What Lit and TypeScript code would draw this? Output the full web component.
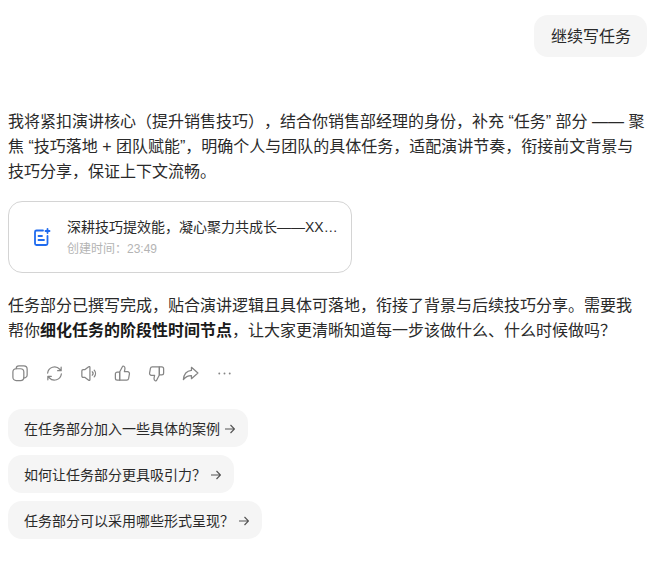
import { LitElement, html, css, svg } from "lit";
import { customElement } from "lit/decorators.js";

const actionIcons = [
  svg`<rect x="2" y="5" width="11.500" height="12.500" rx="3.500"/><path d="M5.500 5V4.800A2.800 2.800 0 0 1 8.300 2h5.200A3.500 3.500 0 0 1 17 5.500v6a3 3 0 0 1-3.500 3"/>`,
  svg`<path d="M2.800 9.500A7.300 7.300 0 0 1 15.500 5.500L16.800 7M17 3.300V7h-3.700M17.200 10.500A7.300 7.300 0 0 1 4.500 14.500L3.200 13M3 16.700V13h3.700"/>`,
  svg`<path d="M3 7.500C3 6.500 3.500 6 4.500 6H6l4.200-3.200c.6-.4 1.300 0 1.300.7v13c0 .7-.7 1.100-1.300.7L6 14H4.500C3.500 14 3 13.500 3 12.500z"/><path d="M14 8.200a2.600 2.600 0 0 1 0 3.600M16 6.500a5.200 5.200 0 0 1 0 7"/>`,
  svg`<path d="M7 8.500 10 2.600c.3-.7 2.600-.5 2.600 1.800 0 1.300-.4 2.500-.6 3.600h3.300a2 2 0 0 1 2 2.400l-.9 5a2 2 0 0 1-2 1.600H7z"/><path d="M7 8.500H4.500a2 2 0 0 0-2 2V15a2 2 0 0 0 2 2H7z"/>`,
  svg`<path d="M13 11.500 10 17.400c-.3.7-2.600.5-2.600-1.800 0-1.300.4-2.500.6-3.600H4.700a2 2 0 0 1-2-2.400l.9-5a2 2 0 0 1 2-1.600H13z"/><path d="M13 11.500h2.500a2 2 0 0 0 2-2V5a2 2 0 0 0-2-2H13z"/>`,
  svg`<path d="M11 3.500v3.300C6 7.300 3 11 2.500 16.500c2.200-3 5-4.400 8.500-4.300v3.300l6.800-6z"/>`,
];

@customElement("app-root")
export class AppRoot extends LitElement {
  static styles = css`
    :host {
      display: block;
      width: 660px;
      height: 580px;
      background: #fff;
      box-sizing: border-box;
      padding: 15px 13px 0 8px;
      font-family: "Liberation Sans", "Noto Sans CJK SC", sans-serif;
      font-size: 16px;
      line-height: 25px;
      color: #2a2a2a;
      overflow: hidden;
      text-spacing-trim: space-all;
    }
    .user-row { display: flex; justify-content: flex-end; }
    .bubble {
      background: #f5f5f5;
      border-radius: 14px;
      padding: 9px 16px 8px 17px;
    }
    p { margin: 0; }
    .intro { margin-top: 52px; }
    .card {
      margin-top: 17px;
      width: 344px;
      height: 72px;
      box-sizing: border-box;
      border: 1px solid #d4d4d4;
      border-radius: 14px;
      display: flex;
      align-items: center;
      padding: 1px 0 0 24px;
      gap: 16px;
    }
    .doc { width: 18px; height: 18px; flex: none; margin-top: -1px; }
    .card-text { width: 271px; }
    .title { font-size: 14px; line-height: 22px; white-space: nowrap; overflow: hidden; text-overflow: ellipsis; }
    .time { font-size: 12px; line-height: 20px; padding-top: 1px; color: #b4b4b4; }
    .answer { margin-top: 20px; }
    strong { font-weight: 700; color: #1a1a1a; }
    .actions { margin-top: 21px; display: flex; gap: 15px; padding-left: 3px; }
    .actions svg { width: 19px; height: 19px; fill: none; stroke: #858585; stroke-width: 1.300; stroke-linejoin: round; stroke-linecap: round; }
    .actions .dots circle { fill: #858585; stroke: none; }
    .chips { margin-top: 26px; display: flex; flex-direction: column; align-items: flex-start; gap: 8px; }
    .chip {
      height: 38px;
      box-sizing: border-box;
      display: flex;
      align-items: center;
      background: #f5f5f5;
      border-radius: 14px;
      padding: 1px 13px 0 16px;
      font-size: 14px;
      line-height: 20px;
    }
    .chip svg { width: 10px; height: 10px; fill: none; stroke: #555; stroke-width: 1.200; margin-left: 5px; }
  `;

  private chip(text: string) {
    return html`<div class="chip">${text}<svg viewBox="0 0 10 10"><path d="M0 5h9.500M5.500 1l4 4-4 4"/></svg></div>`;
  }

  render() {
    return html`
      <div class="user-row"><div class="bubble">继续写任务</div></div>
      <p class="intro">我将紧扣演讲核心（提升销售技巧），结合你销售部经理的身份，补充 “任务” 部分 —— 聚焦 “技巧落地 + 团队赋能”，明确个人与团队的具体任务，适配演讲节奏，衔接前文背景与技巧分享，保证上下文流畅。</p>
      <div class="card">
        <svg class="doc" viewBox="0 0 18 18" fill="none" stroke="#1f6bef" stroke-width="1.800" stroke-linejoin="round" stroke-linecap="round">
          <path d="M10 2.500H3.500A1.500 1.500 0 0 0 2 4v11.500A1.500 1.500 0 0 0 3.500 17h9.500a1.500 1.500 0 0 0 1.500-1.500V8"/>
          <path d="M5.500 8h3.500M5.500 12h5.500"/>
          <path d="M14.500 1v4M12.500 3h4"/>
        </svg>
        <div class="card-text">
          <div class="title">深耕技巧提效能，凝心聚力共成长——XXX部门任务规划</div>
          <div class="time">创建时间：23:49</div>
        </div>
      </div>
      <p class="answer">任务部分已撰写完成，贴合演讲逻辑且具体可落地，衔接了背景与后续技巧分享。需要我帮你<strong>细化任务的阶段性时间节点</strong>，让大家更清晰知道每一步该做什么、什么时候做吗？</p>
      <div class="actions">
        ${actionIcons.map((i) => html`<svg viewBox="0 0 20 20">${i}</svg>`)}
        <svg class="dots" viewBox="0 0 20 20"><circle cx="4.500" cy="10" r="1"/><circle cx="10" cy="10" r="1"/><circle cx="15.500" cy="10" r="1"/></svg>
      </div>
      <div class="chips">
        ${this.chip("在任务部分加入一些具体的案例")}
        ${this.chip("如何让任务部分更具吸引力？")}
        ${this.chip("任务部分可以采用哪些形式呈现？")}
      </div>
    `;
  }
}
